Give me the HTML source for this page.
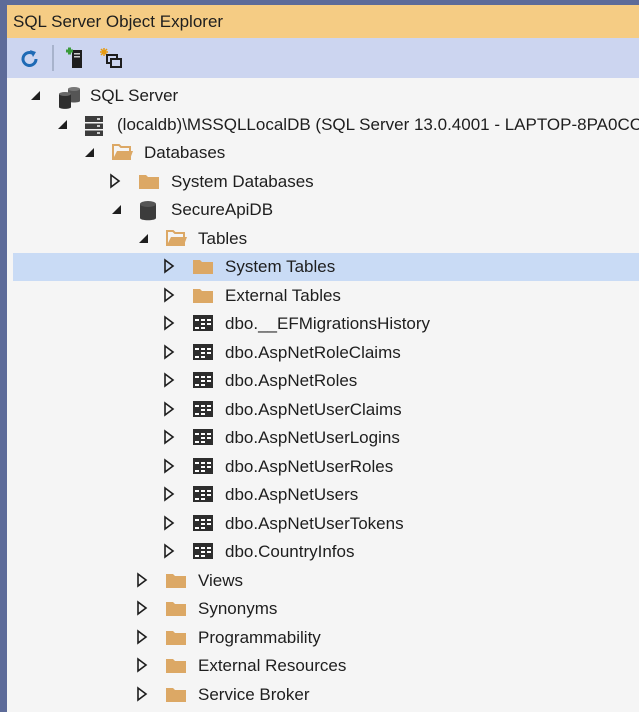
<!DOCTYPE html>
<html><head><style>
body{margin:0;width:639px;height:726px;overflow:hidden;background:#fff;font-family:"Liberation Sans",sans-serif;position:relative}
#lb{position:absolute;left:0;top:0;width:7px;height:712px;background:#5d6b99}
#tb{position:absolute;left:0;top:0;width:639px;height:5px;background:#5d6b99}
#title{position:absolute;left:7px;top:5px;width:632px;height:33px;background:#f5cc84;font-size:17px;color:#1e1e1e;line-height:33px;padding-left:6px;box-sizing:border-box}
#tool{position:absolute;left:7px;top:38px;width:632px;height:40px;background:#ccd5f0}
#tree{position:absolute;left:7px;top:78px;width:632px;height:634px;background:#f5f5f5;overflow:hidden}
.r{position:absolute;left:0;width:632px;height:28px;font-size:17px;color:#1e1e1e;white-space:nowrap}
.r span.t{position:absolute;top:4px}
.sel{background:#c9dbf5}
.tri{position:absolute;top:5px}
.ic{position:absolute;top:4px}
#bot{position:absolute;left:0;top:712px;width:639px;height:14px;background:#fff}
</style></head><body>
<div id="tb"></div><div id="lb"></div>
<div id="title">SQL Server Object Explorer</div>
<div id="tool">
<svg style="position:absolute;left:12px;top:10px" width="22" height="22" viewBox="0 0 22 22"><path d="M17 11a6.5 6.5 0 1 1-3-5.5" fill="none" stroke="#1e6ab5" stroke-width="3"/><path d="M11 2l6 2-3 5z" fill="#1e6ab5"/></svg>
<div style="position:absolute;left:45px;top:7px;width:2px;height:26px;background:#a8b3cc"></div>
<svg style="position:absolute;left:58px;top:8px" width="22" height="24" viewBox="0 0 22 24"><rect x="7" y="4" width="10" height="18" fill="#1e1e1e"/><rect x="9" y="7" width="6" height="1.5" fill="#ccc"/><rect x="9" y="10" width="6" height="1.5" fill="#ccc"/><path d="M1 5h7M4.5 1.5v7" stroke="#3a9a3a" stroke-width="3"/></svg>
<svg style="position:absolute;left:92px;top:8px" width="24" height="24" viewBox="0 0 24 24"><path d="M5 2v8M1 6h8M2 3l6 6M8 3l-6 6" stroke="#e69a10" stroke-width="1.5"/><rect x="8" y="9" width="10" height="8" fill="none" stroke="#1e1e1e" stroke-width="2"/><rect x="12" y="13" width="10" height="8" fill="#ccd5f0" stroke="#1e1e1e" stroke-width="2"/></svg>
</div>
<div id="tree"></div>
<div id="bot"></div>
<script>
const F='<svg width="22" height="18" viewBox="0 0 22 18"><path d="M1 3h7l2 2h11v12H1z" fill="#dca865"/></svg>';
const FO='<svg width="24" height="18" viewBox="0 0 24 18"><path d="M2 2h6l2 2h9v12H2z" fill="none" stroke="#dca865" stroke-width="2"/><path d="M2 16l4-8h16l-3 8z" fill="#dca865"/></svg>';
const T='<svg width="22" height="18" viewBox="0 0 22 18"><rect x="1" y="1" width="20" height="16" fill="#2d2d2d"/><g fill="#fff"><rect x="3" y="5" width="4" height="2"/><rect x="9" y="5" width="4" height="2"/><rect x="15" y="5" width="4" height="2"/><rect x="9" y="9" width="4" height="2"/><rect x="15" y="9" width="4" height="2"/><rect x="3" y="13" width="4" height="2"/><rect x="9" y="13" width="4" height="2"/></g></svg>';
const DB='<svg width="20" height="22" viewBox="0 0 20 22"><path d="M2 4v14c0 3 16 3 16 0V4z" fill="#3c3c3c"/><ellipse cx="10" cy="4" rx="8" ry="3" fill="#555"/></svg>';
const SV='<svg width="20" height="22" viewBox="0 0 20 22"><rect x="1" y="1" width="18" height="20" fill="#3c3c3c"/><rect x="1" y="7" width="18" height="1.5" fill="#f5f5f5"/><rect x="1" y="14" width="18" height="1.5" fill="#f5f5f5"/><rect x="13" y="3" width="3" height="2" fill="#ccc"/><rect x="13" y="10" width="3" height="2" fill="#ccc"/><rect x="13" y="17" width="3" height="2" fill="#ccc"/></svg>';
const SS='<svg width="26" height="24" viewBox="0 0 26 24"><path d="M11 3v12c0 2 12 2 12 0V3z" fill="#555"/><ellipse cx="17" cy="3" rx="6" ry="2" fill="#777"/><path d="M2 8v13c0 2.5 12 2.5 12 0V8z" fill="#2d2d2d"/><ellipse cx="8" cy="8" rx="6" ry="2" fill="#666"/></svg>';
const EX='<svg width="14" height="14" viewBox="0 0 14 14"><path d="M12 3v9H3z" fill="#1e1e1e"/></svg>';
const CO='<svg width="12" height="16" viewBox="0 0 12 16"><path d="M2 2l8 6-8 6z" fill="none" stroke="#1e1e1e" stroke-width="1.6"/></svg>';
const rows=[
[0,1,SS,'SQL Server'],[1,1,SV,'(localdb)\\MSSQLLocalDB (SQL Server 13.0.4001 - LAPTOP-8PA0CC'],[2,1,FO,'Databases'],[3,0,F,'System Databases'],[3,1,DB,'SecureApiDB'],[4,1,FO,'Tables'],
[5,0,F,'System Tables',1],[5,0,F,'External Tables'],[5,0,T,'dbo.__EFMigrationsHistory'],[5,0,T,'dbo.AspNetRoleClaims'],[5,0,T,'dbo.AspNetRoles'],[5,0,T,'dbo.AspNetUserClaims'],[5,0,T,'dbo.AspNetUserLogins'],[5,0,T,'dbo.AspNetUserRoles'],[5,0,T,'dbo.AspNetUsers'],[5,0,T,'dbo.AspNetUserTokens'],[5,0,T,'dbo.CountryInfos'],
[4,0,F,'Views'],[4,0,F,'Synonyms'],[4,0,F,'Programmability'],[4,0,F,'External Resources'],[4,0,F,'Service Broker'],[4,1,F,'Storage']];
let h='';
rows.forEach((r,i)=>{const top=4+i*28.5;const lx=r[0]*27;
h+=`<div class="r${r[4]?' sel':''}" style="top:${top}px;${r[4]?'left:6px':''}"><span class="tri" style="left:${lx+(r[4]?15:21)}px">${r[1]?EX:CO}</span><span class="ic" style="left:${lx+(r[4]?44:50)}px">${r[2]}</span><span class="t" style="left:${lx+(r[4]?77:83)}px">${r[3]}</span></div>`;});
document.getElementById('tree').innerHTML=h;
</script>
</body></html>
